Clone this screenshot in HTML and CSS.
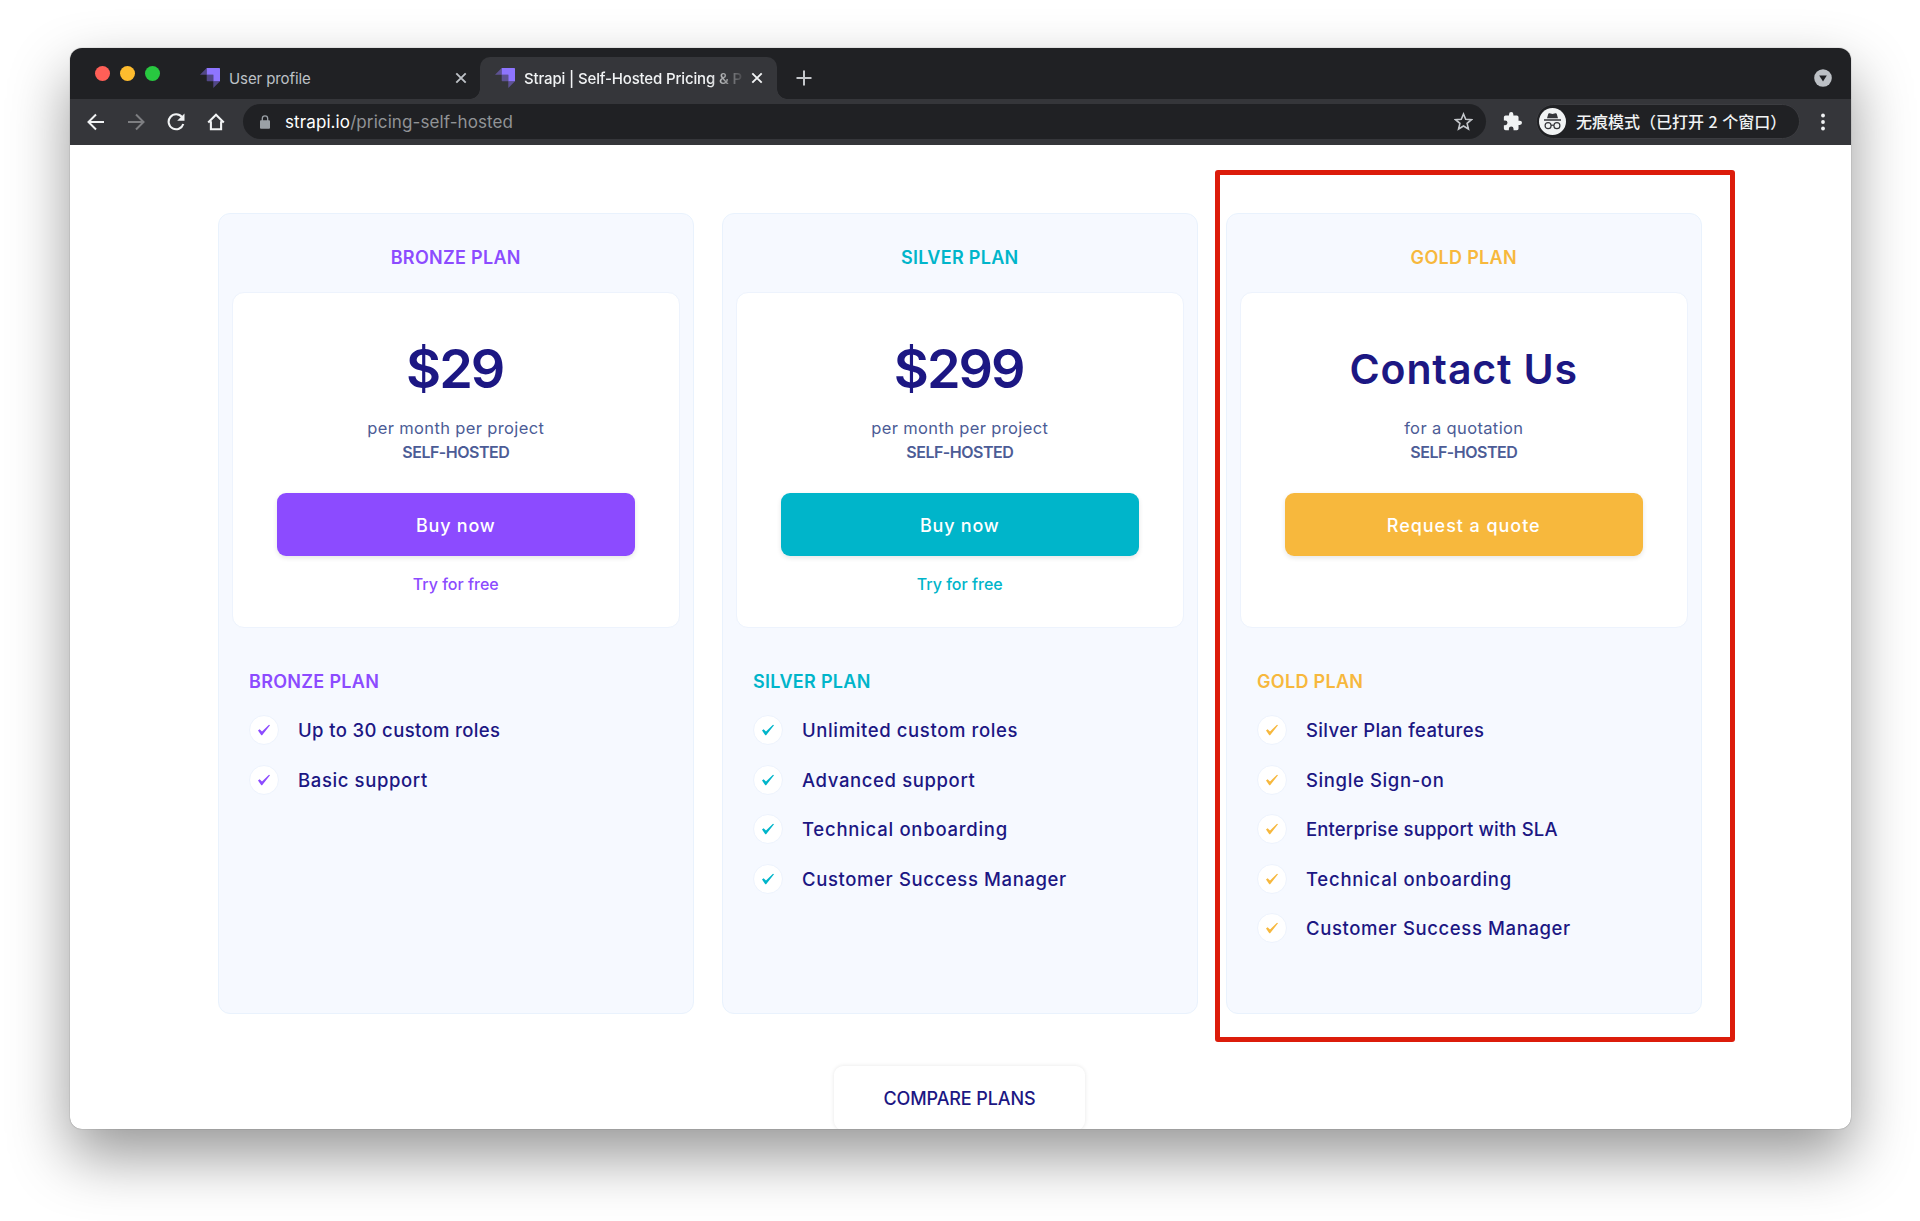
FILE: index.html
```html
<!DOCTYPE html>
<html lang="en">
<head>
<meta charset="utf-8">
<title>Strapi | Self-Hosted Pricing</title>
<link rel="stylesheet" href="styles.css">
</head>
<body>
<svg class="defs" width="0" height="0">
  <symbol id="logo" viewBox="0 0 20 20"><path fill="#8e75ff" d="M6.7 0H19.3Q20 0 20 .7V13.300H13.300V6.700H6.700Z"/><path fill="#8e75ff" opacity=".45" d="M6.700 0V6.700H0ZM6.700 6.700H13.300V13.300H7.400Q6.700 13.300 6.700 12.600ZM13.300 13.300H20L13.300 20Z"/></symbol>
  <symbol id="close" viewBox="0 0 12 12"><path d="M1.300 1.300 10.700 10.700M10.700 1.300 1.300 10.700" fill="none" stroke="currentColor" stroke-width="1.900"/></symbol>
  <symbol id="check" viewBox="0 0 12 12"><path d="M0 6.500 1.600 5.300 4 7.600 11 .7 12 1.200 4.100 11.200H3.300Z" fill="currentColor"/></symbol>
</svg>
<div class="window">
  <header class="tabstrip">
    <div class="lights"><i class="red"></i><i class="yellow"></i><i class="green"></i></div>
    <div class="tab"><svg class="fav"><use href="#logo"/></svg><span class="tab-title">User profile</span><svg class="x"><use href="#close"/></svg></div>
    <div class="tab active"><svg class="fav"><use href="#logo"/></svg><span class="tab-title fade">Strapi | Self-Hosted Pricing &amp; P</span><svg class="x"><use href="#close"/></svg></div>
    <svg class="plus" viewBox="0 0 16 16"><path d="M8 .5v15M.5 8h15" stroke="#c4c7cb" stroke-width="2"/></svg>
    <svg class="drop" viewBox="0 0 18 18"><circle cx="9" cy="9" r="8.800" fill="#bdc1c6"/><path d="M5.200 6.500h7.600L9 12.600Z" fill="#202124"/></svg>
  </header>
  <div class="toolbar">
    <svg class="nav back" viewBox="0 0 18 18"><path d="M17 9H2M9 1.500 1.500 9 9 16.500" fill="none" stroke="#f1f3f4" stroke-width="2"/></svg>
    <svg class="nav forward" viewBox="0 0 18 18"><path d="M1 9H16M9 1.500 16.500 9 9 16.500" fill="none" stroke="#7d7e81" stroke-width="2"/></svg>
    <svg class="nav reload" viewBox="0 0 18 18"><path d="M15 4.100A7.500 7.500 0 1 0 16.300 11" fill="none" stroke="#f1f3f4" stroke-width="2.100"/><path d="M17.500 .5V7.800H10.200Z" fill="#f1f3f4"/></svg>
    <svg class="nav home" viewBox="0 0 18 18"><path d="M1.200 9.500 9 1.800 16.800 9.500M3.900 8.200V16.300H14.100V8.200" fill="none" stroke="#f1f3f4" stroke-width="2.100"/></svg>
    <div class="omnibox">
      <svg class="lock" viewBox="0 0 10 14"><path d="M2.300 6V3.600a2.700 2.700 0 0 1 5.400 0V6" fill="none" stroke="#9aa0a6" stroke-width="1.300"/><rect y="5.200" width="10" height="8.600" rx="1" fill="#9aa0a6"/></svg>
      <span class="url"><span class="host">strapi.io</span>/pricing-self-hosted</span>
      <svg class="star" viewBox="0 0 18 18"><path d="M9 1.900 11.100 6.900 16.500 7.300 12.400 10.800 13.700 16.100 9 13.300 4.300 16.100 5.600 10.800 1.500 7.300 6.900 6.900Z" fill="none" stroke="#c4c7cb" stroke-width="1.500"/></svg>
    </div>
    <svg class="puzzle" viewBox="1 1 22 22"><path fill="#f1f3f4" d="M20.500 11H19V7a2 2 0 0 0-2-2h-4V3.500a2.500 2.500 0 0 0-5 0V5H4a2 2 0 0 0-2 2v3.800h1.500a2.700 2.700 0 0 1 0 5.400H2V20a2 2 0 0 0 2 2h3.800v-1.500a2.700 2.700 0 0 1 5.400 0V22H17a2 2 0 0 0 2-2v-4h1.500a2.500 2.500 0 0 0 0-5Z"/></svg>
    <div class="incognito">
      <svg viewBox="0 0 27 27"><circle cx="13.500" cy="13.500" r="13.500" fill="#f1f3f4"/><path fill="#35363a" d="M9.300 5.800Q9.700 4.900 10.600 5.200L13.500 6 16.400 5.200Q17.300 4.900 17.700 5.800L19 10.300H8ZM5 11.300H22V12.700H5Z"/><g fill="none" stroke="#35363a" stroke-width="1.200"><circle cx="9.100" cy="17.700" r="3"/><circle cx="17.900" cy="17.700" r="3"/><path d="M12.100 17.500Q13.500 16.600 14.900 17.500"/></g></svg>
      <span lang="zh-CN">无痕模式（已打开 2 个窗口）</span>
    </div>
    <svg class="dots" viewBox="0 0 4 18"><circle cx="2" cy="2.500" r="1.900" fill="#f1f3f4"/><circle cx="2" cy="9" r="1.900" fill="#f1f3f4"/><circle cx="2" cy="15.500" r="1.900" fill="#f1f3f4"/></svg>
  </div>
  <main class="page">
    <div class="plans">
      <section class="card bronze">
        <h2>BRONZE PLAN</h2>
        <div class="offer"><div class="price">$29</div><p>per month per project</p><p class="strong">SELF-HOSTED</p><a class="buy">Buy now</a><a class="try">Try for free</a></div>
        <h3>BRONZE PLAN</h3>
        <ul>
          <li class="snug"><i><svg><use href="#check"/></svg></i>Up to 30 custom roles</li>
          <li><i><svg><use href="#check"/></svg></i>Basic support</li>
        </ul>
      </section>
      <section class="card silver">
        <h2>SILVER PLAN</h2>
        <div class="offer"><div class="price">$299</div><p>per month per project</p><p class="strong">SELF-HOSTED</p><a class="buy">Buy now</a><a class="try">Try for free</a></div>
        <h3>SILVER PLAN</h3>
        <ul>
          <li><i><svg><use href="#check"/></svg></i>Unlimited custom roles</li>
          <li><i><svg><use href="#check"/></svg></i>Advanced support</li>
          <li class="loose"><i><svg><use href="#check"/></svg></i>Technical onboarding</li>
          <li><i><svg><use href="#check"/></svg></i>Customer Success Manager</li>
        </ul>
      </section>
      <section class="card gold">
        <h2>GOLD PLAN</h2>
        <div class="offer"><div class="price contact">Contact Us</div><p>for a quotation</p><p class="strong">SELF-HOSTED</p><a class="buy quote">Request a quote</a></div>
        <h3>GOLD PLAN</h3>
        <ul>
          <li class="snug"><i><svg><use href="#check"/></svg></i>Silver Plan features</li>
          <li><i><svg><use href="#check"/></svg></i>Single Sign-on</li>
          <li class="tight"><i><svg><use href="#check"/></svg></i>Enterprise support with SLA</li>
          <li class="loose"><i><svg><use href="#check"/></svg></i>Technical onboarding</li>
          <li><i><svg><use href="#check"/></svg></i>Customer Success Manager</li>
        </ul>
      </section>
    </div>
    <a class="compare">COMPARE PLANS</a>
  </main>
</div>
<div class="highlight"></div>
</body>
</html>
```
FILE: styles.css
```css
* { box-sizing: border-box; }
body { margin: 0; width: 1920px; height: 1221px; overflow: hidden; background: #fff; padding: 48px 69px 0 70px; font-family: Inter, "Noto Sans CJK SC", sans-serif; }
i { font-style: normal; }
svg { display: block; flex: none; }
.defs { position: absolute; }
.window { height: 1081px; border-radius: 12px; overflow: hidden; background: #fff; display: flex; flex-direction: column; box-shadow: 0 0 1px rgba(0,0,0,.6), 0 27px 60px rgba(0,0,0,.41); }

/* Browser tabs */
.tabstrip { flex: none; height: 51px; background: #202124; display: flex; align-items: flex-end; }
.lights { display: flex; gap: 10px; padding: 0 0 18px 25px; width: 115px; }
.lights i { width: 15px; height: 15px; border-radius: 50%; }
.red { background: #ff5f57; }
.yellow { background: #febc2e; }
.green { background: #28c840; }
.tab { height: 42px; width: 295px; padding: 0 13px 0 15px; display: flex; align-items: center; color: #bdc1c6; font-size: 15px; letter-spacing: -.1px; white-space: nowrap; }
.tab.active { position: relative; width: 297px; padding: 0 14px 0 15px; background: #35363a; border-radius: 10px 10px 0 0; color: #f1f3f4; font-weight: 500; letter-spacing: -.15px; }
.tab.active::before, .tab.active::after { content: ""; position: absolute; bottom: 0; width: 10px; height: 10px; }
.tab.active::before { left: -10px; background: radial-gradient(circle at 0 0, transparent 9.500px, #35363a 10px); }
.tab.active::after { right: -10px; background: radial-gradient(circle at 100% 0, transparent 9.500px, #35363a 10px); }
.fav { width: 20px; height: 20px; margin-right: 9px; }
.tab-title { flex: 1; overflow: hidden; }
.fade { -webkit-mask: linear-gradient(90deg, #000 185px, transparent 222px); mask: linear-gradient(90deg, #000 185px, transparent 222px); }
.x { width: 12px; height: 12px; }
.plus { width: 16px; height: 16px; margin: 0 0 13px 19px; }
.drop { width: 18px; height: 18px; margin: 0 19px 12px auto; }

/* Toolbar */
.toolbar { flex: none; height: 46px; background: #35363a; display: flex; align-items: center; padding: 0 26px 1px 17px; }
.nav { width: 18px; height: 18px; margin-right: 22px; }
.home { margin-right: 18px; }
.omnibox { width: 1243px; height: 35px; border-radius: 18px; background: #202124; display: flex; align-items: center; padding: 0 13px 0 17px; }
.lock { width: 10px; height: 14px; margin-right: 15px; }
.url { font-size: 17px; color: #919396; flex: 1; letter-spacing: .1px; }
.host { color: #fff; }
.star { width: 19px; height: 19px; }
.puzzle { width: 19px; height: 19px; margin: 0 14px 0 17px; }
.incognito { width: 264px; height: 35px; border-radius: 18px; background: #202124; border: 1px solid #3c3d41; display: flex; align-items: center; gap: 10px; padding-left: 2px; color: #f1f3f4; font: 500 16px "Noto Sans CJK SC", sans-serif; word-spacing: 1px; white-space: nowrap; }
.incognito span { padding-bottom: 1px; }
.incognito svg { width: 27px; height: 27px; }
.dots { width: 4px; height: 18px; margin-left: auto; }

/* Pricing page */
.page { flex: 1; padding: 68px 150px 0 148px; display: flex; flex-direction: column; align-items: center; overflow: hidden; }
.plans { flex: none; align-self: stretch; display: grid; grid-template-columns: repeat(3, 475.500px); column-gap: 28.500px; height: 801px; }
.card { background: #f6f9ff; border: 1px solid #e9f2fd; border-radius: 12px; padding: 0 13px; }
.bronze { --c: #8c4bff; }
.silver { --c: #00b5ca; }
.gold { --c: #f7b83d; }
h2, h3 { margin: 0; font-size: 18px; font-weight: 600; color: var(--c); letter-spacing: .3px; }
h2 { height: 78px; padding-top: 9px; display: flex; justify-content: center; align-items: center; }
.offer { height: 336px; background: #fff; border: 1px solid #edf3fd; border-radius: 12px; display: flex; flex-direction: column; align-items: center; padding: 41px 44px 0; }
.price { height: 70px; line-height: 70px; font-size: 54px; font-weight: 600; color: #1c1783; letter-spacing: -2px; margin-left: -2px; }
.contact { font-size: 41px; letter-spacing: .85px; margin-left: 0; }
.offer p { margin: 0; height: 23.500px; line-height: 23.500px; font-size: 16.500px; letter-spacing: .36px; color: #4c5c96; }
.price + p { margin-top: 13px; }
.offer .strong { font-size: 16px; font-weight: 600; letter-spacing: -.5px; }
.buy { margin-top: 29px; width: 358px; height: 63px; padding-top: 1px; border-radius: 9px; background: var(--c); color: #fff; font-size: 18px; font-weight: 500; letter-spacing: .75px; display: flex; align-items: center; justify-content: center; box-shadow: 0 2px 5px rgba(0,0,0,.1); }
.quote { letter-spacing: .95px; }
.try { margin-top: 16px; line-height: 24px; font-size: 16px; font-weight: 500; color: var(--c); }
h3 { margin: 43px 0 0 17px; line-height: 22px; }
ul { list-style: none; margin: 12.500px 0 0 16.500px; padding: 0; }
li { height: 49.500px; display: flex; align-items: center; gap: 19.500px; font-size: 18.500px; font-weight: 500; letter-spacing: .62px; color: #1c1783; }
.tight { letter-spacing: .15px; }
.snug { letter-spacing: .37px; }
.loose { letter-spacing: .74px; }
li i { width: 30px; height: 30px; border-radius: 50%; background: #fff; border: 1px solid #edf3fd; display: flex; align-items: center; justify-content: center; color: var(--c); }
li svg { width: 12px; height: 12px; }
.compare { flex: none; margin-top: 52px; width: 251px; height: 64px; border-radius: 9px; background: #fff; box-shadow: 0 0 4px rgba(0,0,0,.1); color: #1c1783; font-size: 18px; font-weight: 500; letter-spacing: -.1px; display: flex; align-items: center; justify-content: center; }

/* Annotation frame around the gold plan */
.highlight { position: absolute; left: 1215px; top: 170px; width: 520px; height: 872px; border: 5px solid #dc1c0b; border-radius: 3px; }
```
